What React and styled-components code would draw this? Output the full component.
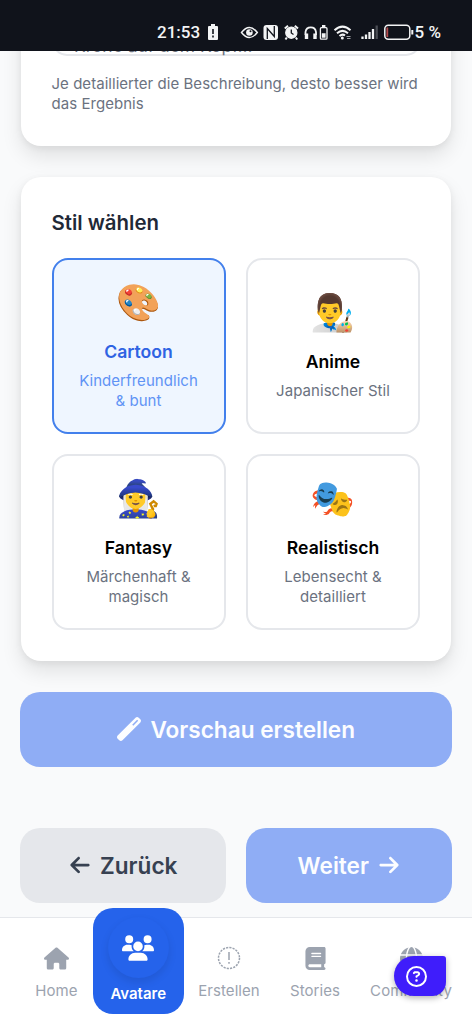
import React from "react";
import styled, { createGlobalStyle, css } from "styled-components";
import {
  FaHouse,
  FaUsers,
  FaBook,
  FaGlobe,
  FaArrowLeft,
  FaArrowRight,
  FaWandMagic,
  FaRegCircleQuestion,
} from "react-icons/fa6";

const GlobalStyle = createGlobalStyle`
  * { box-sizing: border-box; }
  body { margin: 0; font-family: Inter, "Liberation Sans", sans-serif; }
  button { font: inherit; border: 0; margin: 0; }
`;

const Screen = styled.div`
  position: relative;
  display: flex;
  flex-direction: column;
  width: 472px;
  height: 1024px;
  overflow: hidden;
  background: #f9fafb;
`;

const StatusBar = styled.header`
  flex: none;
  display: flex;
  align-items: center;
  height: 51px;
  padding: 13px 31px 0 157px;
  background: #10131b;
  color: #f3f4f5;
  z-index: 1;
`;

const StatusText = styled.span`
  font-family: Roboto, "Liberation Sans", sans-serif;
  font-size: 17px;
  font-weight: 500;
  line-height: 20px;
  white-space: nowrap;
`;

const StatusIcons = styled.div`
  display: flex;
  align-items: center;
  gap: 1px;
  margin-left: auto;
`;

const Content = styled.main`
  flex: 1;
  min-height: 0;
  display: flex;
  flex-direction: column;
  justify-content: flex-end;
  padding: 0 20px 14px;
  overflow: hidden;
`;

const Card = styled.section`
  flex: none;
  margin: 0 1px 31px;
  padding: 31px 30.5px 31.5px;
  border-radius: 20px;
  background: #fff;
  box-shadow: 0 10px 20px rgba(0, 0, 0, 0.1), 0 2px 7px rgba(0, 0, 0, 0.06);
`;

const Input = styled.div`
  height: 64px;
  margin-bottom: 18px;
  padding: 40px 20.5px 0;
  border: 2px solid #e5e7eb;
  border-radius: 15px;
  color: #6b7280;
  font-size: 17.4px;
  line-height: 24px;
  white-space: nowrap;
`;

const Hint = styled.p`
  margin: 0;
  color: #6b7280;
  font-size: 15px;
  line-height: 20px;
  letter-spacing: 0.04px;
  white-space: nowrap;
`;

const Heading = styled.h2`
  margin: 0 0 21.4px;
  color: #1f2937;
  font-size: 20.4px;
  font-weight: 600;
  line-height: 29px;
`;

const StyleGrid = styled.div`
  display: grid;
  grid-template-columns: 174px 174px;
  grid-auto-rows: 175.5px;
  gap: 20.5px;
`;

const Tile = styled.button`
  display: flex;
  flex-direction: column;
  align-items: center;
  justify-content: center;
  padding: 1px 0 0;
  border: 2.5px solid ${(p) => (p.$active ? "#4380ec" : "#e5e7eb")};
  border-radius: 16px;
  background: ${(p) => (p.$active ? "#eff6ff" : "#fff")};
`;

const Emoji = styled.span`
  height: 42px;
  margin-bottom: 16px;
  font-family: "Noto Color Emoji", sans-serif;
  font-size: 36px;
  line-height: 42px;
`;

const TileTitle = styled.span`
  margin-bottom: 7px;
  color: ${(p) => (p.$active ? "#2f63e3" : "#000")};
  font-size: 17.6px;
  font-weight: 600;
  line-height: 24px;
`;

const TileText = styled.span`
  color: ${(p) => (p.$active ? "#6093f5" : "#6b7280")};
  font-size: 15px;
  line-height: 20px;
  letter-spacing: 0.05px;
  white-space: pre-line;
`;

const ActionRow = styled.div`
  display: flex;
  gap: 20px;
  margin-top: 61px;
`;

const Action = styled.button`
  flex: ${(p) => (p.$wide ? "none" : "1")};
  display: flex;
  align-items: center;
  justify-content: center;
  gap: 9.5px;
  height: 75px;
  padding: 0 0 1px;
  border-radius: 20px;
  font-size: 22.6px;
  font-weight: 600;
  ${(p) =>
    p.$muted
      ? css`
          background: #e5e7eb;
          color: #374151;
        `
      : css`
          background: #8fadf5;
          color: #fcfdff;
        `}
`;

const TabBar = styled.nav`
  flex: none;
  display: flex;
  align-items: flex-start;
  height: 107px;
  padding-left: 20px;
  border-top: 1px solid #e5e7eb;
  background: #fff;
  z-index: 1;
`;

const Tab = styled.div`
  display: flex;
  flex-direction: column;
  align-items: center;
  width: ${(p) => p.$width}px;
  padding-top: 27px;
  color: #9ca3af;
  font-size: 15px;
  line-height: 20px;
  letter-spacing: 0.06px;
  ${(p) =>
    p.$active &&
    css`
      height: 106px;
      margin-top: -10px;
      padding-top: 9px;
      border-radius: 20px;
      background: #2563eb;
      color: #fff;
      font-weight: 600;
      letter-spacing: 0;
    `}
`;

const TabIcon = styled.span`
  display: flex;
  align-items: center;
  justify-content: center;
  height: 26px;
  margin-bottom: 10px;
  ${(p) =>
    p.$active &&
    css`
      width: 61px;
      height: 61px;
      margin-bottom: 6px;
      border-radius: 50%;
      background: #2563eb;
      box-shadow: 0 4px 8px rgba(0, 0, 0, 0.1);
    `}
`;

const HelpButton = styled.button`
  position: absolute;
  left: 394px;
  top: 956px;
  z-index: 2;
  display: flex;
  align-items: center;
  justify-content: center;
  width: 52px;
  height: 40px;
  padding: 0 7px 0 0;
  border-radius: 20px 3px 14px 20px;
  background: #3f1dfb;
  color: #fff;
  box-shadow: 0 2px 6px rgba(0, 0, 0, 0.3);
`;

const AlertGlyph = styled.svg`
  margin-left: 8px;
`;

const BatteryAlert = () => (
  <AlertGlyph width="10" height="16" viewBox="0 0 10 16">
    <path d="M3 0h4v2h2q1 0 1 1v12q0 1-1 1H1q-1 0-1-1V3q0-1 1-1h2z" fill="#f3f4f5" />
    <path d="M5 5v5M5 11.5v2" stroke="#10131b" strokeWidth="1.6" />
  </AlertGlyph>
);

const StatusGlyphs = () => (
  <svg width="174" height="20" viewBox="240 22 174 20" fill="none" stroke="#f3f4f5">
    <path d="M241.500 32.500Q249.300 22.500 257.300 32.500Q249.300 42.500 241.500 32.500Z" strokeWidth="1.500" />
    <circle cx="249.400" cy="32.500" r="3.300" fill="#f3f4f5" stroke="none" />
    <circle cx="250.500" cy="31.200" r="1" fill="#10131b" stroke="none" />
    <rect x="263.500" y="25" width="14.500" height="15" rx="3" fill="#f3f4f5" stroke="none" />
    <path d="M267.300 39V28.500L274.300 36.500V26" stroke="#10131b" strokeWidth="1.300" />
    <circle cx="291.300" cy="32.700" r="5.600" fill="#f3f4f5" strokeWidth="1.200" />
    <path d="M291.300 29.500V33L293.500 34.500" stroke="#10131b" strokeWidth="1.300" />
    <path d="M284.800 28.500L288 25.800M294.800 25.800L298 28.500M286.800 37.500L285.500 39.500M295.800 37.500L297.200 39.500" strokeWidth="2" />
    <path d="M305.500 35V32A5.300 5.300 0 0 1 316 32V35" strokeWidth="1.800" />
    <path d="M306.500 33.500V39M315 33.500V39" strokeWidth="3.400" />
    <rect x="320.400" y="27.700" width="6.600" height="11.500" rx="1" strokeWidth="1.300" />
    <path d="M322 26H325.400" strokeWidth="2" />
    <path d="M321.800 35.500H325.600" strokeWidth="4.500" />
    <path d="M334.500 30.300Q342.500 23 350.500 30.300M337 33.200Q342.500 28.500 348 33.200M339.500 36Q342.500 33.500 345 35.500" strokeWidth="2" />
    <circle cx="342.300" cy="38" r="1.500" fill="#f3f4f5" stroke="none" />
    <path d="M346.500 36.500H350.500M347 38.500H350.500" stroke="#a5a8ad" strokeWidth="1.200" />
    <path d="M362.500 39V36.500M366 39V34.500M369.500 39V32M373 39V29" strokeWidth="2.300" />
    <path d="M376.700 39V25.500" stroke="#4a4d54" strokeWidth="2.300" />
    <rect x="384.800" y="25.200" width="25" height="14" rx="3.500" strokeWidth="1.500" />
    <path d="M387.300 27.500V37" stroke="#b34a4c" strokeWidth="1.800" />
    <path d="M412.300 30V34.500" strokeWidth="2" />
  </svg>
);

const DashedAlert = () => (
  <svg width="24" height="24" viewBox="0 0 24 24" fill="none" stroke="currentColor">
    <circle cx="12" cy="12" r="10.500" strokeWidth="1.500" strokeDasharray="2.199 1.100" />
    <path d="M12 6V14M12 16V17.700" strokeWidth="1.500" />
  </svg>
);

const styles = [
  { emoji: "🎨", title: "Cartoon", text: "Kinderfreundlich\n& bunt", active: true },
  { emoji: "👨‍🎨", title: "Anime", text: "Japanischer Stil" },
  { emoji: "🧙‍♀️", title: "Fantasy", text: "Märchenhaft &\nmagisch" },
  { emoji: "🎭", title: "Realistisch", text: "Lebensecht &\ndetailliert" },
];

const tabs = [
  { label: "Home", width: 73, icon: <FaHouse size={25} /> },
  { label: "Avatare", width: 90.5, icon: <FaUsers size={32} />, active: true },
  { label: "Erstellen", width: 91, icon: <DashedAlert /> },
  { label: "Stories", width: 81, icon: <FaBook size={23} /> },
  { label: "Community", width: 111, icon: <FaGlobe size={23} /> },
];

export default function App() {
  return (
    <Screen>
      <GlobalStyle />
      <StatusBar>
        <StatusText>21:53</StatusText>
        <BatteryAlert />
        <StatusIcons>
          <StatusGlyphs />
          <StatusText>5 %</StatusText>
        </StatusIcons>
      </StatusBar>
      <Content>
        <Card>
          <Input>Krone auf dem Kopf...</Input>
          <Hint>
            Je detaillierter die Beschreibung, desto besser wird
            <br />
            das Ergebnis
          </Hint>
        </Card>
        <Card>
          <Heading>Stil wählen</Heading>
          <StyleGrid>
            {styles.map((s) => (
              <Tile key={s.title} $active={s.active}>
                <Emoji>{s.emoji}</Emoji>
                <TileTitle $active={s.active}>{s.title}</TileTitle>
                <TileText $active={s.active}>{s.text}</TileText>
              </Tile>
            ))}
          </StyleGrid>
        </Card>
        <Action $wide>
          <FaWandMagic size={24} />
          Vorschau erstellen
        </Action>
        <ActionRow>
          <Action $muted>
            <FaArrowLeft size={22} />
            Zurück
          </Action>
          <Action>
            Weiter
            <FaArrowRight size={22} />
          </Action>
        </ActionRow>
      </Content>
      <TabBar>
        {tabs.map((t) => (
          <Tab key={t.label} $width={t.width} $active={t.active}>
            <TabIcon $active={t.active}>{t.icon}</TabIcon>
            {t.label}
          </Tab>
        ))}
      </TabBar>
      <HelpButton aria-label="Hilfe">
        <FaRegCircleQuestion size={21} />
      </HelpButton>
    </Screen>
  );
}
